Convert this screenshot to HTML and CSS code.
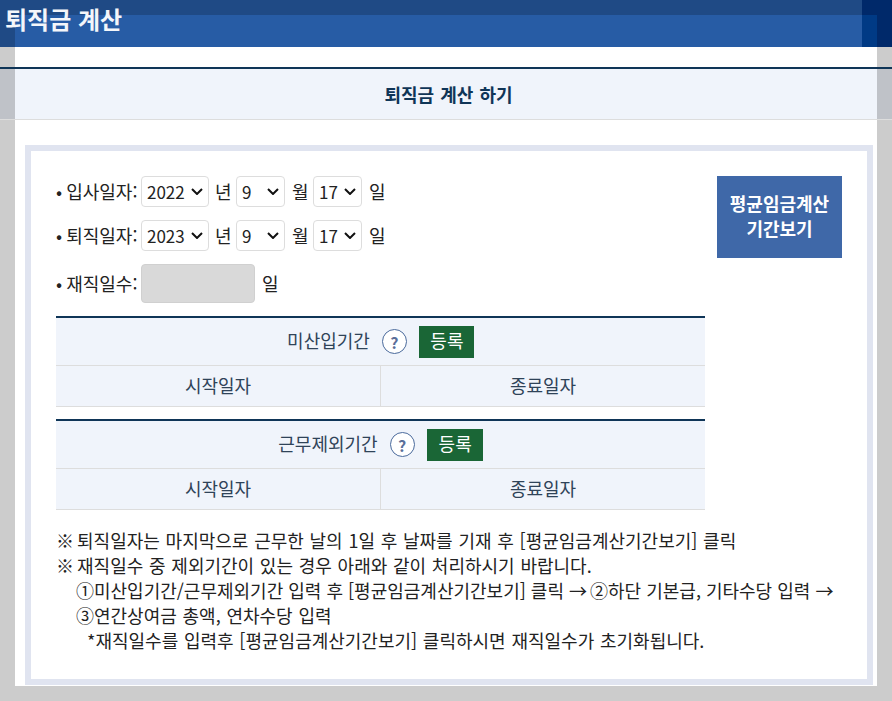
FILE: index.html
```html
<!DOCTYPE html>
<html lang="ko">
<head>
<meta charset="utf-8">
<title>퇴직금 계산</title>
<link rel="stylesheet" href="styles.css">
</head>
<body>
<header class="topbar">
  <div class="cell c-top-a"></div>
  <div class="cell c-top-b"></div>
  <div class="cell c-left"></div>
  <div class="cell c-main"></div>
  <div class="cell c-edge"></div>
  <div class="cell c-right"></div>
  <h1 class="app-title">퇴직금 계산</h1>
</header>
<main class="panel">
  <div class="panel-gap"></div>
  <div class="band">
    <div class="band-side"></div>
    <h2 class="band-title">퇴직금 계산 하기</h2>
    <div class="band-side"></div>
  </div>
  <section class="box">
    <div class="top">
      <div class="left">
        <div class="form-row">
          <span class="label"><span class="bullet">•</span> 입사일자:</span>
          <select class="sel sel-y"><option>2022</option></select><span class="unit">년</span>
          <select class="sel sel-m"><option>9</option></select><span class="unit unit-wide">월</span>
          <select class="sel sel-m"><option>17</option></select><span class="unit unit-wide">일</span>
        </div>
        <div class="form-row">
          <span class="label"><span class="bullet">•</span> 퇴직일자:</span>
          <select class="sel sel-y"><option>2023</option></select><span class="unit">년</span>
          <select class="sel sel-m"><option>9</option></select><span class="unit unit-wide">월</span>
          <select class="sel sel-m"><option>17</option></select><span class="unit unit-wide">일</span>
        </div>
        <div class="form-row form-row-input">
          <span class="label"><span class="bullet">•</span> 재직일수:</span>
          <input class="days" type="text" disabled><span class="unit unit-wide">일</span>
        </div>
        <div class="period">
          <div class="period-head">
            <span class="period-name">미산입기간</span>
            <span class="help">?</span>
            <button class="reg reg-a" type="button">등록</button>
          </div>
          <div class="period-row">
            <div class="period-cell">시작일자</div>
            <div class="period-cell">종료일자</div>
          </div>
        </div>
        <div class="period">
          <div class="period-head">
            <span class="period-name">근무제외기간</span>
            <span class="help">?</span>
            <button class="reg" type="button">등록</button>
          </div>
          <div class="period-row">
            <div class="period-cell">시작일자</div>
            <div class="period-cell">종료일자</div>
          </div>
        </div>
      </div>
      <button class="view" type="button">평균임금계산<br>기간보기</button>
    </div>
    <div class="notes">
      <p><span class="mark">※</span> 퇴직일자는 마지막으로 근무한 날의 1일 후 날짜를 기재 후 [평균임금계산기간보기] 클릭</p>
      <p><span class="mark">※</span> 재직일수 중 제외기간이 있는 경우 아래와 같이 처리하시기 바랍니다.</p>
      <p class="indent indent-tight">①미산입기간/근무제외기간 입력 후 [평균임금계산기간보기] 클릭 <span class="arrow">→</span> ②하단 기본급, 기타수당 입력 <span class="arrow">→</span></p>
      <p class="indent">③연간상여금 총액, 연차수당 입력</p>
      <p class="indent-star">*재직일수를 입력후 [평균임금계산기간보기] 클릭하시면 재직일수가 초기화됩니다.</p>
    </div>
  </section>
</main>
</body>
</html>
```
FILE: styles.css
```css
* { box-sizing: border-box; }
html, body { margin: 0; padding: 0; }
body {
  width: 892px;
  height: 701px;
  overflow: hidden;
  background: #cccccc;
  font-family: "Noto Sans CJK KR", "Noto Sans", sans-serif;
  font-size: 18px;
  color: #222222;
}

.topbar {
  position: relative;
  display: grid;
  grid-template-columns: 15px 847px 15px 15px;
  grid-template-rows: 15px 32px;
  height: 47px;
}
.c-top-a { grid-column: 1 / 3; background: #1f4a85; }
.c-top-b { grid-column: 3 / 5; background: #00296a; }
.c-left { background: #1f4a85; }
.c-main { background: #275ca5; }
.c-edge { background: #003a85; }
.c-right { background: #00296a; }
.app-title {
  position: absolute;
  left: 5px;
  top: 2px;
  margin: 0;
  font-size: 24px;
  font-weight: 700;
  line-height: 34px;
  color: #f4f6fa;
}

.panel {
  width: 862px;
  height: 639px;
  margin-left: 15px;
  background: #ffffff;
  padding: 0 4px 1px 10px;
}
.panel-gap { height: 20px; }

.band {
  display: grid;
  grid-template-columns: 15px 862px 15px;
  width: 892px;
  height: 53px;
  margin-left: -25px;
  border-top: 2px solid #0f3557;
  border-bottom: 1px solid #dddddd;
  background: #f0f4fb;
}
.band-side { background: #bfc2c8; }
.band-title {
  margin: 0;
  padding-left: 5px;
  font-size: 18px;
  font-weight: 700;
  line-height: 50px;
  word-spacing: 1px;
  text-align: center;
  color: #0f3557;
}

.box {
  height: 540px;
  margin-top: 25px;
  padding: 25px 25px 0;
  border: 6px solid #e0e4f0;
}
.top {
  display: flex;
  justify-content: space-between;
  align-items: flex-start;
}
.left { width: 649px; }

.form-row {
  display: flex;
  align-items: center;
  height: 31px;
  margin-bottom: 13px;
}
.form-row-input { height: 39px; margin-bottom: 13px; }
.label { width: 85px; padding-bottom: 2px; white-space: nowrap; }
.bullet { letter-spacing: -1px; }
.sel {
  height: 31px;
  padding: 0 0 0 5px;
  border: 1px solid #dddddd;
  border-radius: 4px;
  background: #ffffff url("data:image/svg+xml,%3Csvg xmlns='http://www.w3.org/2000/svg' width='12' height='7' viewBox='0 0 12 7'%3E%3Cpath d='M1 1l5 5 5-5' fill='none' stroke='%23111' stroke-width='2'/%3E%3C/svg%3E") no-repeat right 5px center;
  appearance: none;
  -webkit-appearance: none;
  font: inherit;
  font-size: 17px;
  color: #222222;
}
.sel-y { width: 68px; }
.sel-m { width: 49px; }
.unit { width: 27px; padding: 0 0 2px 6px; }
.unit-wide { width: 28px; padding-left: 7px; }
.days {
  width: 114px;
  height: 39px;
  border: 1px solid #d0d0d0;
  border-radius: 4px;
  background: #d9d9d9;
}

.period {
  border-top: 2px solid #0f3557;
  margin-bottom: 12px;
  background: #f0f4fb;
  color: #2f4358;
}
.period:last-child { margin-bottom: 0; }
.period-head {
  display: flex;
  justify-content: center;
  align-items: center;
  gap: 12px;
  height: 48px;
  border-bottom: 1px solid #dddddd;
}
.period-name { padding-bottom: 3px; }
.help {
  display: flex;
  justify-content: center;
  align-items: center;
  width: 25px;
  height: 25px;
  border: 1px solid #4a6a9c;
  border-radius: 50%;
  background: #ffffff;
  font-size: 16px;
  font-weight: 700;
  color: #5a6f9a;
}
.reg {
  width: 56px;
  height: 32px;
  padding: 0 0 3px 1px;
  border: 0;
  background: #1a6636;
  font: inherit;
  color: #ffffff;
}
.reg-a { width: 55px; }
.period-row {
  display: grid;
  grid-template-columns: 324px 325px;
  height: 41px;
  border-bottom: 1px solid #dddddd;
}
.period-cell {
  line-height: 38px;
  text-align: center;
}
.period-cell + .period-cell { border-left: 1px solid #dddddd; }

.view {
  width: 125px;
  height: 82px;
  padding: 0 0 2px;
  border: 0;
  background: #3f68a8;
  font: inherit;
  font-size: 18px;
  font-weight: 700;
  line-height: 25px;
  color: #ffffff;
}

.notes { margin-top: 18px; white-space: nowrap; word-spacing: 0.7px; }
.notes p { margin: 0; line-height: 25px; }
.notes .indent { padding-left: 20px; }
.notes .indent-tight { word-spacing: 0; }
.notes .indent-star { padding-left: 31px; }
.mark { letter-spacing: -2.7px; }
.arrow { letter-spacing: -2px; }
```
